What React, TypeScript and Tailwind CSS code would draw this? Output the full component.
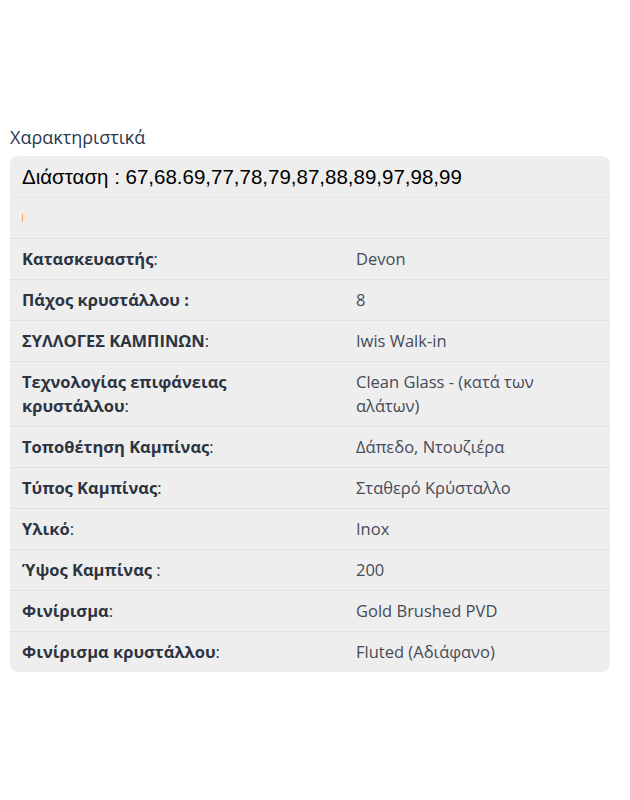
const specs: { label: string; colon: string; value: string }[] = [
  { label: 'Κατασκευαστής', colon: ':', value: 'Devon' },
  { label: 'Πάχος κρυστάλλου :', colon: '', value: '8' },
  { label: 'ΣΥΛΛΟΓΕΣ ΚΑΜΠΙΝΩΝ', colon: ':', value: 'Iwis Walk-in' },
  { label: 'Τεχνολογίας επιφάνειας κρυστάλλου', colon: ':', value: 'Clean Glass - (κατά των αλάτων)' },
  { label: 'Τοποθέτηση Καμπίνας', colon: ':', value: 'Δάπεδο, Ντουζιέρα' },
  { label: 'Τύπος Καμπίνας', colon: ':', value: 'Σταθερό Κρύσταλλο' },
  { label: 'Υλικό', colon: ':', value: 'Inox' },
  { label: 'Ύψος Καμπίνας', colon: ' :', value: '200' },
  { label: 'Φινίρισμα', colon: ':', value: 'Gold Brushed PVD' },
  { label: 'Φινίρισμα κρυστάλλου', colon: ':', value: 'Fluted (Αδιάφανο)' },
];

export default function App() {
  return (
    <div className="w-[630px] h-[800px] bg-white pt-[124px] px-[10px] font-['Open_Sans',sans-serif]">
      <h3 className="text-[18px] leading-[26px] text-[#2b3a4f] mb-[6px]">Χαρακτηριστικά</h3>

      <div className="w-[600px] bg-[#eeeeee] rounded-lg overflow-hidden">
        <div className="h-[41px] px-3 pt-[2px] flex items-center font-['Liberation_Sans',Arial,sans-serif] text-[20.5px] text-black">
          Διάσταση : 67,68.69,77,78,79,87,88,89,97,98,99
        </div>
        <div className="h-[41px] px-3 flex items-center border-t border-[#e6e6e6]">
          <span className="w-px h-2 bg-[#f0a060]" />
        </div>

        {specs.map((s) => (
          <div key={s.label} className="flex border-t border-[#e0e0e0] text-[16.5px] leading-6">
            <div className="w-[334px] shrink-0 pl-3 pr-8 py-2 text-[#2c3442]">
              <span className="font-bold">{s.label}</span>
              {s.colon}
            </div>
            <div className="flex-1 px-3 py-2 pr-16 text-[#464b58]">{s.value}</div>
          </div>
        ))}
      </div>
    </div>
  );
}
